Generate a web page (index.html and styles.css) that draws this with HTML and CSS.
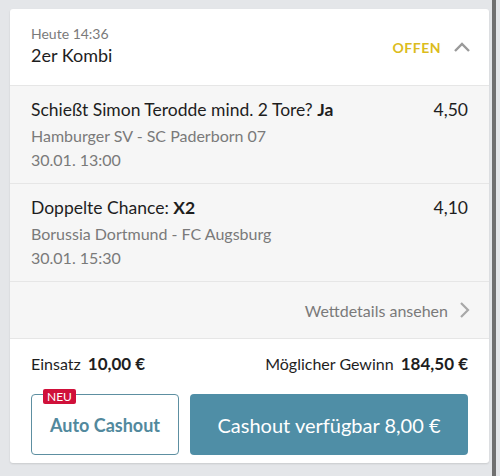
FILE: index.html
```html
<!DOCTYPE html>
<html lang="de">

<head>
    <meta charset="UTF-8">
    <meta name="viewport" content="width=device-width, initial-scale=1.0">
    <title>Wettschein</title>
    <link rel="stylesheet" href="styles.css">
</head>

<body>
    <div class="page">
        <div class="card">
            <div class="head">
                <div>
                    <div class="time">Heute 14:36</div>
                    <div class="kind">2er Kombi</div>
                </div>
                <div class="status">
                    <span>OFFEN</span>
                    <svg width="18" height="12" viewBox="0 0 18 12"><path d="M2 10 L9 3 L16 10" fill="none" stroke="#9a9a9a" stroke-width="2.4"/></svg>
                </div>
            </div>

            <div class="leg">
                <div class="leg-top">
                    <div class="market">Schießt Simon Terodde mind. 2 Tore? <b>Ja</b></div>
                    <div class="odds">4,50</div>
                </div>
                <div class="event">Hamburger SV - SC Paderborn 07</div>
                <div class="event">30.01. 13:00</div>
            </div>

            <div class="leg">
                <div class="leg-top">
                    <div class="market">Doppelte Chance: <b>X2</b></div>
                    <div class="odds">4,10</div>
                </div>
                <div class="event">Borussia Dortmund - FC Augsburg</div>
                <div class="event">30.01. 15:30</div>
            </div>

            <div class="details">
                <span>Wettdetails ansehen</span>
                <svg width="12" height="18" viewBox="0 0 12 18"><path d="M3 2 L10 9 L3 16" fill="none" stroke="#a8a8a8" stroke-width="2.2"/></svg>
            </div>

            <div class="foot">
                <div class="sums">
                    <div>Einsatz <b>10,00 €</b></div>
                    <div>Möglicher Gewinn <b>184,50 €</b></div>
                </div>
                <div class="actions">
                    <button class="btn-auto">
                        <span class="badge">NEU</span>
                        Auto Cashout
                    </button>
                    <button class="btn-cash">Cashout verfügbar 8,00 €</button>
                </div>
            </div>
        </div>
        <div class="scrollbar"></div>
    </div>
</body>

</html>
```

FILE: styles.css
```css
body {
    margin: 0;
    background-color: #e4e6e9;
    font-family: 'Lato', 'Noto Sans', sans-serif;
    color: #1e1e1e;
}

.page {
    display: flex;
    height: 476px;
    padding: 9px 0 0 10px;
    box-sizing: border-box;
}

.card {
    width: 479px;
    height: 454px;
    background-color: #ffffff;
    border-radius: 3px;
    box-shadow: 0 1px 2px rgba(0, 0, 0, 0.12);
    display: flex;
    flex-direction: column;
    overflow: hidden;
}

.scrollbar {
    width: 4px;
    margin-left: 3px;
    margin-top: -9px;
    height: 476px;
    background-color: #707070;
}

.head {
    display: flex;
    justify-content: space-between;
    align-items: center;
    height: 76px;
    padding: 0 18px 0 21px;
    border-bottom: 1px solid #e6e6e6;
}

.time {
    font-size: 14px;
    color: #7a7a7a;
    margin-top: -3px;
    margin-bottom: 2px;
}

.kind {
    font-size: 18px;
}

.status {
    display: flex;
    align-items: center;
    gap: 12px;
    font-size: 14px;
    font-weight: 700;
    letter-spacing: 0.5px;
    color: #dcbc1c;
}

.leg {
    background-color: #f6f6f6;
    height: 98px;
    padding: 13px 21px 0;
    box-sizing: border-box;
    border-bottom: 1px solid #e6e6e6;
}

.leg-top {
    display: flex;
    justify-content: space-between;
    font-size: 17.5px;
    margin-bottom: 4px;
}

.market b {
    font-weight: 700;
}

.event {
    font-size: 16px;
    color: #7a7a7a;
    line-height: 24px;
}

.details {
    background-color: #f6f6f6;
    height: 56px;
    display: flex;
    justify-content: flex-end;
    align-items: center;
    gap: 10px;
    padding: 0 19px;
    font-size: 16px;
    color: #7a7a7a;
    border-bottom: 1px solid #e6e6e6;
}

.foot {
    padding: 14px 21px 0;
}

.sums {
    display: flex;
    justify-content: space-between;
    font-size: 16px;
}

.sums b {
    font-size: 17px;
    margin-left: 3px;
}

.actions {
    display: flex;
    gap: 11px;
    margin-top: 20px;
}

.btn-auto {
    position: relative;
    width: 148px;
    height: 61px;
    border: 1px solid #5d8fa1;
    border-radius: 4px;
    background-color: #ffffff;
    color: #52899d;
    font-family: inherit;
    font-size: 18px;
    font-weight: 700;
}

.badge {
    position: absolute;
    top: -6px;
    left: 11px;
    background-color: #d0103a;
    color: #ffffff;
    font-size: 12px;
    font-weight: 400;
    padding: 0 4px;
    border-radius: 2px;
    line-height: 15px;
}

.btn-cash {
    flex: 1;
    height: 61px;
    border: none;
    border-radius: 4px;
    background-color: #4f8ea6;
    color: #ffffff;
    font-family: inherit;
    font-size: 20px;
}
```
